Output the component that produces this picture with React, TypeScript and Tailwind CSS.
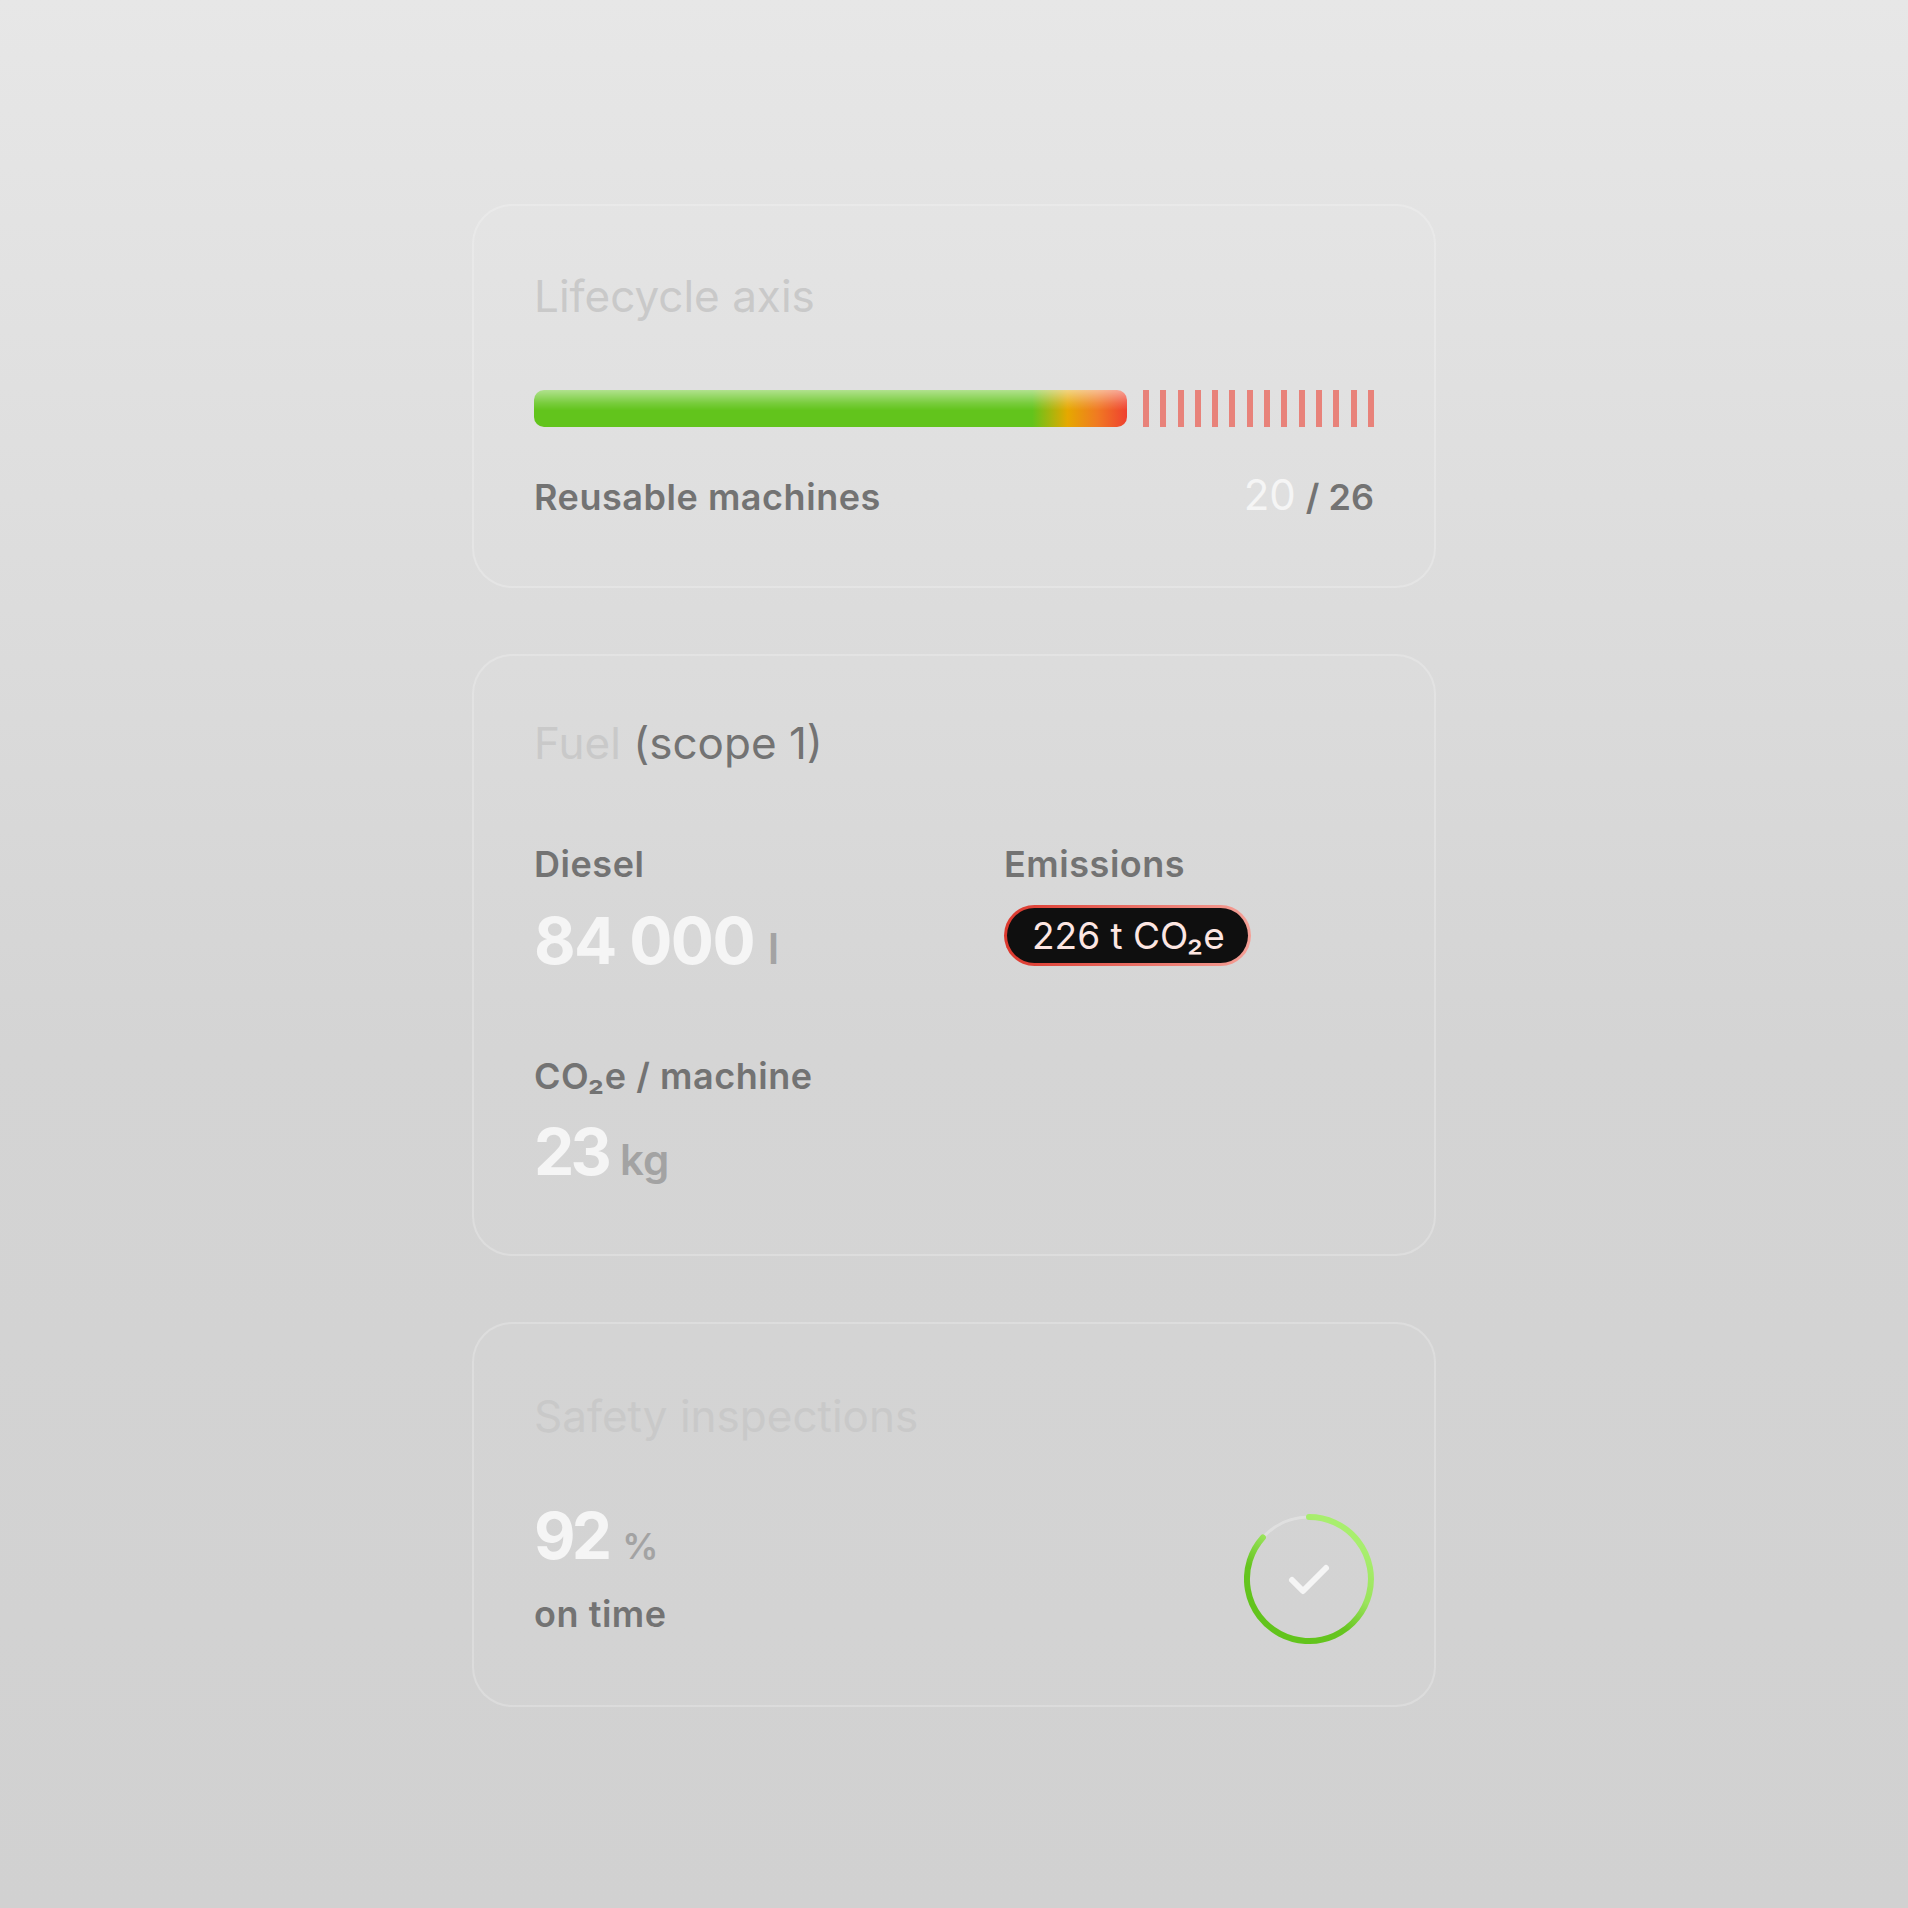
import React from "react";

const stripes = Array.from({ length: 14 });

function Card({ className, children }: { className: string; children: React.ReactNode }) {
  return (
    <div className={`rounded-[40px] border-2 border-white/20 bg-white/[0.04] px-[60px] ${className}`}>
      {children}
    </div>
  );
}

function CheckRing() {
  return (
    <svg width="130" height="130" viewBox="0 0 130 130" className="-mb-[8px] shrink-0">
      <defs>
        <linearGradient id="ring" x1="105" y1="25" x2="45" y2="115" gradientUnits="userSpaceOnUse">
          <stop offset="0" stopColor="#a8ee6e" />
          <stop offset="0.4" stopColor="#9be45c" />
          <stop offset="0.72" stopColor="#66c520" />
          <stop offset="1" stopColor="#62c41c" />
        </linearGradient>
      </defs>
      <circle cx="65" cy="65" r="62" fill="none" stroke="rgba(255,255,255,0.28)" strokeWidth="3" />
      <path
        d="M65 3 A62 62 0 1 1 18.9 23.5"
        fill="none"
        stroke="url(#ring)"
        strokeWidth="6"
        strokeLinecap="round"
      />
      <path
        d="M48 66 L59 77 L82 54"
        fill="none"
        stroke="#f5f5f5"
        strokeWidth="6"
        strokeLinecap="round"
        strokeLinejoin="round"
      />
    </svg>
  );
}

export default function App() {
  return (
    <div className="min-h-[1908px] w-full bg-[linear-gradient(to_bottom,#e7e7e7_0%,#d4d4d4_55%,#d1d1d1_100%)] [font-family:Inter,sans-serif]">
      <div className="mx-auto flex w-[964px] flex-col gap-[66px] pt-[204px]">
        {/* Lifecycle */}
        <Card className="pt-[63px] pb-[67px]">
          <h2 className="text-[44px] leading-[54px] font-normal text-[#c9c9c9]">Lifecycle axis</h2>
          <div className="mt-[67px] flex h-[37px] items-stretch">
            <div className="w-[593px] rounded-[10px] bg-[linear-gradient(to_bottom,rgba(255,255,255,0.5)_0%,rgba(255,255,255,0.15)_35%,rgba(255,255,255,0)_55%),linear-gradient(to_right,#62c41c_0%,#62c41c_84%,#e6a800_90%,#f07a22_95%,#ef4030_100%)]" />
            <div className="ml-[16px] flex flex-1 justify-between">
              {stripes.map((_, i) => (
                <div key={i} className="w-[6px] bg-[#e8827a]" />
              ))}
            </div>
          </div>
          <div className="mt-[46px] flex items-baseline justify-between">
            <span className="text-[36px] leading-[44px] font-semibold tracking-[0.015em] text-[#737373]">
              Reusable machines
            </span>
            <span className="flex items-baseline leading-[44px]">
              <span className="text-[42px] font-normal text-[#f5f5f5]">20</span>
              <span className="ml-[10px] text-[36px] font-semibold text-[#737373]">/ 26</span>
            </span>
          </div>
        </Card>

        {/* Fuel */}
        <Card className="pt-[60px] pb-[66px]">
          <h2 className="text-[44px] leading-[54px] font-normal text-[#c9c9c9]">
            Fuel <span className="text-[#737373]">(scope 1)</span>
          </h2>
          <div className="mt-[72px] grid grid-cols-2 gap-x-[100px]">
            <div>
              <div className="text-[36px] leading-[44px] font-semibold tracking-[0.015em] text-[#737373]">Diesel</div>
              <div className="mt-[19px] flex items-baseline">
                <span className="text-[64px] leading-[72px] font-bold tracking-[-0.025em] text-[#f5f5f5]">84 000</span>
                <span className="ml-[14px] text-[42px] leading-none font-semibold text-[#a3a3a3]">l</span>
              </div>
            </div>
            <div>
              <div className="text-[36px] leading-[44px] font-semibold tracking-[0.015em] text-[#737373]">Emissions</div>
              <div className="mt-[19px]">
                <div className="inline-flex rounded-full bg-[linear-gradient(to_right,#dc382d,#f4a097)] p-[3px]">
                  <div className="flex h-[55px] items-center rounded-full bg-[#0f0f0f] pl-[25px] pr-[23px] text-[37px] leading-none font-normal text-[#fde6e2]">
                    226 t CO₂e
                  </div>
                </div>
              </div>
            </div>
          </div>
          <div className="mt-[77px] text-[36px] leading-[44px] font-semibold tracking-[0.015em] text-[#737373]">
            CO₂e / machine
          </div>
          <div className="mt-[18px] flex items-baseline">
            <span className="text-[64px] leading-[72px] font-bold tracking-[-0.06em] text-[#f5f5f5]">23</span>
            <span className="ml-[12px] text-[42px] leading-none font-semibold text-[#a3a3a3]">kg</span>
          </div>
        </Card>

        {/* Safety */}
        <Card className="pt-[65px] pb-[69px]">
          <h2 className="text-[44px] leading-[54px] font-normal text-[#c9c9c9]">Safety inspections</h2>
          <div className="mt-[57px] flex items-end justify-between">
            <div>
              <div className="flex items-baseline">
                <span className="text-[64px] leading-[72px] font-bold tracking-[-0.06em] text-[#f5f5f5]">92</span>
                <span className="ml-[14px] text-[36px] leading-none font-semibold text-[#a3a3a3]">%</span>
              </div>
              <div className="mt-[20px] text-[36px] leading-[44px] font-semibold tracking-[0.015em] text-[#737373]">
                on time
              </div>
            </div>
            <CheckRing />
          </div>
        </Card>
      </div>
    </div>
  );
}
